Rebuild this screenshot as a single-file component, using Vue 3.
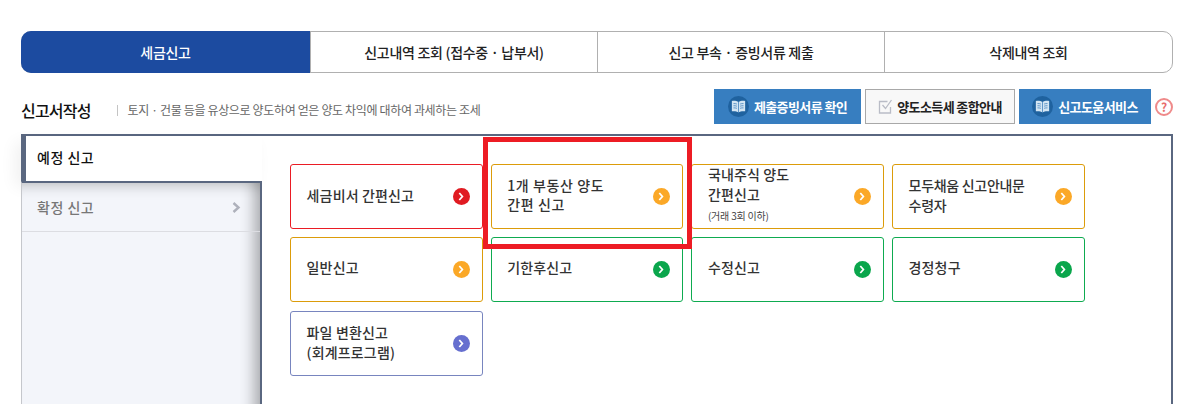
<template>
  <div class="page">
    <ul class="tabs">
      <li v-for="(t, i) in tabs" :key="t" class="tab" :class="{ on: i === 0 }">{{ t }}</li>
    </ul>

    <div class="head">
      <h2 class="title">신고서작성</h2>
      <p class="desc">토지 · 건물 등을 유상으로 양도하여 얻은 양도 차익에 대하여 과세하는 조세</p>
      <div class="actions">
        <button type="button" class="btn blue first">
          <span class="book">
            <svg viewBox="0 0 14 12" width="15" height="13"><path d="M7 1.800C5.400.8 2.800.5.8.9v9.600c2-.4 4.600-.1 6.200.9 1.600-1 4.200-1.300 6.200-.9V.9C11.200.5 8.600.8 7 1.800z" fill="#d3e5f3"/><path d="M7 1.800v9.600M2.300 3.300c1-.1 2.200 0 3.200.4M2.300 5.300c1-.1 2.200 0 3.200.4M2.300 7.300c1-.1 2.200 0 3.200.4M11.700 3.300c-1-.1-2.200 0-3.200.4M11.700 5.300c-1-.1-2.200 0-3.200.4M11.700 7.300c-1-.1-2.200 0-3.200.4" fill="none" stroke="#5b93c6" stroke-width=".9"/></svg>
          </span>
          제출증빙서류 확인
        </button>
        <button type="button" class="btn plain">
          <svg viewBox="0 0 15 15" width="15" height="15"><path d="M12.500 8v6H1.500V2.500h8" fill="none" stroke="#b9bcc6" stroke-width="1.300"/><path d="M4.500 6l3 3.500L13.500 1" fill="none" stroke="#b9bcc6" stroke-width="1.300"/></svg>
          양도소득세 종합안내
        </button>
        <button type="button" class="btn blue second">
          <span class="book">
            <svg viewBox="0 0 14 12" width="15" height="13"><path d="M7 1.800C5.400.8 2.800.5.8.9v9.600c2-.4 4.600-.1 6.200.9 1.600-1 4.200-1.300 6.200-.9V.9C11.200.5 8.600.8 7 1.800z" fill="#d3e5f3"/><path d="M7 1.800v9.600M2.300 3.300c1-.1 2.200 0 3.200.4M2.300 5.300c1-.1 2.200 0 3.200.4M2.300 7.300c1-.1 2.200 0 3.200.4M11.700 3.300c-1-.1-2.200 0-3.200.4M11.700 5.300c-1-.1-2.200 0-3.200.4M11.700 7.300c-1-.1-2.200 0-3.200.4" fill="none" stroke="#5b93c6" stroke-width=".9"/></svg>
          </span>
          신고도움서비스
        </button>
        <span class="help">?</span>
      </div>
    </div>

    <div class="panel">
      <div class="side">
        <div class="side-on">예정 신고</div>
        <div class="side-rest">
          <div class="side-item">
            확정 신고
            <svg class="side-arrow" viewBox="0 0 9 11" width="9" height="11"><path d="M1.500 1l5 4.500-5 4.500" fill="none" stroke="#aeb1bb" stroke-width="2.400"/></svg>
          </div>
        </div>
      </div>

      <div class="cards">
        <a v-for="c in cards" :key="c.id" class="card" :class="[c.tone, c.pos]">
          <span class="card-text">
            <span v-for="l in c.lines" :key="l" class="line">{{ l }}</span>
            <small v-if="c.note">{{ c.note }}</small>
          </span>
          <span class="go">
            <svg viewBox="0 0 8 10" width="7" height="9"><path d="M1.500 1l3.500 4-3.500 4" fill="none" stroke="#fff" stroke-width="2"/></svg>
          </span>
        </a>
      </div>

      <div class="mark"></div>
    </div>
  </div>
</template>

<script setup>
const tabs = ['세금신고', '신고내역 조회 (접수중 · 납부서)', '신고 부속 · 증빙서류 제출', '삭제내역 조회']

const cards = [
  { id: 1, tone: 'red', lines: ['세금비서 간편신고'] },
  { id: 2, tone: 'amber', pos: 'wide', lines: ['1개 부동산 양도', '간편 신고'] },
  { id: 3, tone: 'amber', pos: 'tall', lines: ['국내주식 양도', '간편신고'], note: '(거래 3회 이하)' },
  { id: 4, tone: 'amber', pos: 'tight', lines: ['모두채움 신고안내문', '수령자'] },
  { id: 5, tone: 'amber', pos: 'up', lines: ['일반신고'] },
  { id: 6, tone: 'green', pos: 'up', lines: ['기한후신고'] },
  { id: 7, tone: 'green', pos: 'up', lines: ['수정신고'] },
  { id: 8, tone: 'green', pos: 'up', lines: ['경정청구'] },
  { id: 9, tone: 'violet', lines: ['파일 변환신고', '(회계프로그램)'] },
]
</script>

<style scoped>
.page {
  position: relative;
  height: 404px;
  overflow: hidden;
  box-sizing: border-box;
  padding: 31px 10px 0 21px;
  background: #fff;
  font-family: "Noto Sans CJK KR", "Noto Sans", sans-serif;
  color: #222;
}

.tabs {
  display: grid;
  grid-template-columns: 288px 287px 287px 1fr;
  height: 42px;
  margin: 0;
  padding: 0;
  list-style: none;
  box-sizing: border-box;
  border: 1px solid #b0b0b0;
  border-radius: 10px;
}

.tab {
  display: flex;
  align-items: center;
  justify-content: center;
  font-size: 14px;
  font-weight: 500;
  letter-spacing: -0.3px;
  color: #222;
}

.tab + .tab {
  border-left: 1px solid #b0b0b0;
}

.tab.on {
  margin: -1px 0 -1px -1px;
  background: #1c4ba0;
  color: #fff;
  border-radius: 10px 0 0 10px;
}

.head {
  display: flex;
  align-items: center;
  height: 35px;
  margin-top: 16px;
}

.title {
  margin: 6px 0 0;
  font-size: 16px;
  font-weight: 500;
  letter-spacing: -0.8px;
  color: #111;
}

.desc {
  position: relative;
  margin: 6px 0 0 37px;
  font-size: 12px;
  color: #666;
  letter-spacing: -0.35px;
}

.desc::before {
  content: "";
  position: absolute;
  left: -11px;
  top: 4px;
  height: 11px;
  border-left: 1px solid #c4c4c4;
}

.actions {
  display: flex;
  align-items: center;
  margin-left: auto;
}

.btn {
  display: flex;
  align-items: center;
  justify-content: center;
  height: 35px;
  padding: 0;
  border: 0;
  font-family: inherit;
  font-size: 13px;
  font-weight: 700;
  letter-spacing: -0.6px;
  box-sizing: border-box;
}

.blue {
  background: #377ec0;
  color: #fff;
  gap: 5px;
}

.first {
  width: 147px;
}

.second {
  width: 132px;
}

.plain {
  width: 150px;
  margin: 0 4px;
  gap: 4px;
  background: #f8f8f8;
  border: 1px solid #a8a8a8;
  color: #222;
}

.book {
  display: flex;
  align-items: center;
  justify-content: center;
  width: 21px;
  height: 21px;
  border-radius: 50%;
  background: #1f629f;
}

.help {
  display: flex;
  align-items: center;
  justify-content: center;
  width: 14px;
  height: 14px;
  margin-left: 4px;
  border: 2px solid #ef8a8a;
  border-radius: 50%;
  font-size: 12px;
  font-weight: 700;
  color: #e86c6c;
}

.panel {
  position: relative;
  display: flex;
  height: 300px;
  margin-top: 10px;
  box-sizing: border-box;
  border: 2px solid #5a6780;
  border-left: 0;
}

.side {
  display: flex;
  flex-direction: column;
  width: 241px;
  flex-shrink: 0;
}

.side-on {
  height: 45px;
  padding-left: 11px;
  line-height: 43px;
  background: #fff;
  border-left: 5px solid #5a6780;
  font-size: 14px;
  font-weight: 500;
  letter-spacing: 0.5px;
  color: #111;
  box-shadow: -6px 6px 16px rgba(0, 0, 0, 0.06);
}

.side-rest {
  flex: 1;
  box-sizing: border-box;
  background: #f3f5fa;
  border-top: 2px solid #5a6780;
  border-right: 2px solid #5a6780;
  border-left: 1px solid #c5c7cc;
  box-shadow: inset -16px 0 14px -10px rgba(0, 0, 0, 0.3), inset 0 14px 12px -10px rgba(0, 0, 0, 0.18);
}

.side-item {
  display: flex;
  align-items: center;
  justify-content: space-between;
  height: 49px;
  padding: 0 19px 0 15px;
  box-sizing: border-box;
  border-bottom: 1px solid #dcdde2;
  font-size: 14px;
  font-weight: 500;
  letter-spacing: 0.5px;
  color: #777;
}

.cards {
  display: grid;
  grid-template-columns: repeat(4, 192.67px);
  grid-auto-rows: 65px;
  gap: 8.4px 8px;
  align-content: start;
  padding: 28px 0 0 28px;
}

.card {
  display: flex;
  align-items: center;
  justify-content: space-between;
  padding: 0 12px 0 15.6px;
  box-sizing: border-box;
  border: 1px solid;
  border-radius: 3px;
  background: #fff;
  color: #333;
  font-size: 14px;
  font-weight: 500;
  letter-spacing: 0.15px;
}

.card-text {
  display: flex;
  flex-direction: column;
  margin-top: -4px;
  line-height: 20px;
}

.line {
  white-space: nowrap;
}

.card small {
  font-size: 10px;
  font-weight: 400;
  line-height: 17px;
  margin-top: 3px;
  letter-spacing: -0.2px;
  color: #444;
}

.card.up .card-text {
  margin-top: -5px;
}

.card.violet .card-text {
  margin-top: -2px;
}

.card.tall .card-text {
  margin-top: -6px;
}

.card.wide {
  letter-spacing: 0.6px;
}

.card.wide .card-text {
  line-height: 19px;
}

.card.tight {
  letter-spacing: -0.3px;
}

.go {
  display: flex;
  align-items: center;
  justify-content: center;
  width: 17px;
  height: 17px;
  border-radius: 50%;
  flex-shrink: 0;
}

.red {
  border-color: #ea1c24;
}

.red .go {
  background: #e01b22;
}

.amber {
  border-color: #dc9c0a;
}

.amber .go {
  background: #fba827;
}

.green {
  border-color: #0eab50;
}

.green .go {
  background: #0aa64c;
}

.violet {
  border-color: #7885bf;
}

.violet .go {
  background: #666fcf;
}

.mark {
  position: absolute;
  left: 462px;
  top: 1px;
  width: 209px;
  height: 112px;
  box-sizing: border-box;
  border: 5px solid #ed1c24;
  pointer-events: none;
}
</style>
